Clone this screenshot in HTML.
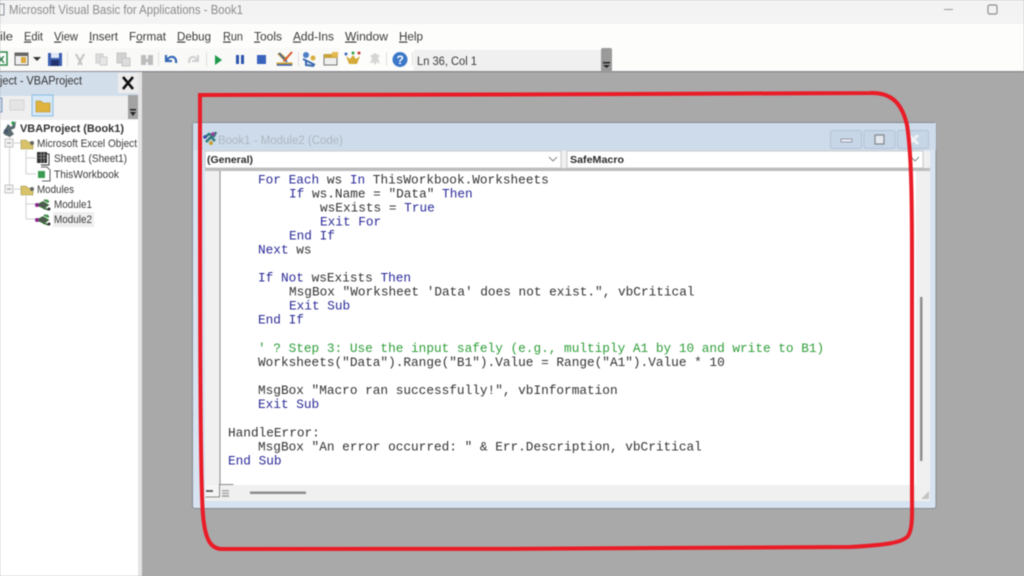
<!DOCTYPE html>
<html><head><meta charset="utf-8"><style>
html,body{margin:0;padding:0;width:1024px;height:576px;overflow:hidden;background:#a9a9a9}
svg{display:block;position:absolute;left:0;top:0;filter:blur(.4px)}
.ui{font-family:"Liberation Sans",sans-serif;font-size:11.5px;fill:#3a3a3a}
.m{font-family:"Liberation Mono",monospace;font-size:12.75px;fill:#333}
.k{fill:#2a2a98}.c{fill:#2f9e3a}
.u{text-decoration:underline}
</style></head><body>
<svg width="1024" height="576" viewBox="0 0 1024 576" xmlns="http://www.w3.org/2000/svg">
<rect width="1024" height="576" fill="#a9a9a9"/>
<!-- title bar -->
<rect width="1024" height="24" fill="#f3f3f3"/>
<rect y="24" width="1024" height="47" fill="#fdfdfb"/>
<rect y="48" width="340" height="23" fill="#f9f9f8"/>
<rect y="71" width="1024" height="1.5" fill="#8f8f94"/>
<rect x="-3" y="4" width="7" height="11" fill="none" stroke="#8a8f99"/>
<text class="ui" x="9" y="14" textLength="234" lengthAdjust="spacingAndGlyphs" style="fill:#8c8c8c;font-size:12.5px">Microsoft Visual Basic for Applications - Book1</text>
<rect x="944" y="9" width="9" height="1" fill="#999"/>
<rect x="988" y="5" width="9" height="9" rx="1.5" fill="none" stroke="#8f8f8f" stroke-width="1.2"/>
<!-- menu -->
<g class="ui">
<text x="0" y="40.500" textLength="13" lengthAdjust="spacingAndGlyphs">ile</text>
<text x="24" y="40.500" textLength="19" lengthAdjust="spacingAndGlyphs"><tspan class="u">E</tspan>dit</text>
<text x="54" y="40.500" textLength="24" lengthAdjust="spacingAndGlyphs"><tspan class="u">V</tspan>iew</text>
<text x="89" y="40.500" textLength="29" lengthAdjust="spacingAndGlyphs"><tspan class="u">I</tspan>nsert</text>
<text x="129" y="40.500" textLength="37" lengthAdjust="spacingAndGlyphs">F<tspan class="u">o</tspan>rmat</text>
<text x="177" y="40.500" textLength="34" lengthAdjust="spacingAndGlyphs"><tspan class="u">D</tspan>ebug</text>
<text x="223" y="40.500" textLength="20" lengthAdjust="spacingAndGlyphs"><tspan class="u">R</tspan>un</text>
<text x="254" y="40.500" textLength="28" lengthAdjust="spacingAndGlyphs"><tspan class="u">T</tspan>ools</text>
<text x="293" y="40.500" textLength="41" lengthAdjust="spacingAndGlyphs"><tspan class="u">A</tspan>dd-Ins</text>
<text x="345" y="40.500" textLength="43" lengthAdjust="spacingAndGlyphs"><tspan class="u">W</tspan>indow</text>
<text x="399" y="40.500" textLength="24" lengthAdjust="spacingAndGlyphs"><tspan class="u">H</tspan>elp</text>
</g>
<!-- toolbar icons -->
<rect x="-4" y="52" width="11" height="13" fill="#fff" stroke="#2f8a4a" stroke-width="1.5"/>
<text x="-2" y="63" style="font:bold 10px 'Liberation Sans',sans-serif;fill:#1f7a3f">X</text>
<rect x="15" y="53" width="13" height="12" fill="#eee" stroke="#666"/><rect x="15" y="53" width="13" height="3" fill="#666"/><rect x="21" y="57" width="5" height="6" fill="#d9a93f"/>
<path d="M33 57h8l-4 4z" fill="#333"/>
<rect x="48" y="53" width="14" height="13" fill="#3d5fb0"/><rect x="51" y="53" width="8" height="5" fill="#dfe6f5"/><rect x="51" y="60" width="8" height="6" fill="#22336f"/>
<rect x="67" y="52" width="1" height="14" fill="#ddd"/>
<path d="M76 54l6 11M84 54l-6 11" stroke="#c4c4c4" stroke-width="2" fill="none"/>
<rect x="96" y="54" width="7" height="9" fill="#ddd" stroke="#ccc"/><rect x="100" y="57" width="7" height="8" fill="#e6e6e6" stroke="#ccc"/>
<rect x="117" y="53" width="9" height="10" fill="#d2d2d2" stroke="#c4c4c4"/><rect x="122" y="58" width="8" height="8" fill="#ddd" stroke="#c4c4c4"/>
<path d="M141 55h5v4h2v-4h5v10h-5v-3h-2v3h-5z" fill="#bdbdbd"/>
<rect x="158" y="52" width="1" height="14" fill="#ddd"/>
<path d="M166 55v6h6M167 60c3-5 10-4 9 3" fill="none" stroke="#3568b5" stroke-width="2.2"/>
<path d="M198 55v6h-6M197 60c-3-5-8-4-8 3" fill="none" stroke="#cfcfcf" stroke-width="2"/>
<rect x="206" y="52" width="1" height="14" fill="#ddd"/>
<path d="M215 55l7 5-7 5z" fill="#1f9a4a"/>
<rect x="236" y="55" width="3" height="9" fill="#2c55ad"/><rect x="241" y="55" width="3" height="9" fill="#2c55ad"/>
<rect x="257" y="55" width="9" height="9" fill="#3a63bd"/>
<path d="M277 65h15v-2h-15zM278 54l7 7 2-2-7-6zM292 52l-9 10" fill="#c8a032" stroke="#c8a032"/>
<path d="M277 65h15M279 53l8 9" stroke="#3560b0" stroke-width="1.5"/>
<path d="M292 52l-8 9" stroke="#d65a2a" stroke-width="2"/>
<rect x="298" y="52" width="1" height="14" fill="#ddd"/>
<circle cx="306" cy="55" r="3" fill="#4c7fc4"/><path d="M303 59l12 6M306 60v5l8 1" stroke="#3a6aae" stroke-width="2" fill="none"/><circle cx="313" cy="58" r="2.5" fill="#d8b040"/>
<rect x="324" y="55" width="13" height="10" fill="#efefef" stroke="#777"/><rect x="324" y="54" width="13" height="4" fill="#c9a23a"/><rect x="332" y="52" width="6" height="5" fill="#e3b950"/>
<path d="M346 56l3 8h8l3-8-4 3-3-4-3 4z" fill="#d4aa3a"/><circle cx="346" cy="54" r="1.5" fill="#3a6ac0"/><circle cx="353" cy="53" r="1.5" fill="#3aa04a"/><circle cx="359" cy="53" r="1.5" fill="#c83a3a"/>
<path d="M370 56l5-3 5 3-2 2 2 6-3-2-2 3-2-3-3 2 2-6z" fill="#d6d6d6"/>
<rect x="386" y="52" width="1" height="14" fill="#ddd"/>
<circle cx="400" cy="59.5" r="7.5" fill="#3b78c8"/><text x="396.500" y="64" style="font:bold 12px 'Liberation Sans',sans-serif;fill:#fff">?</text>
<rect x="412" y="52" width="1" height="14" fill="#ddd"/>
<rect x="414" y="50" width="188" height="21" fill="#f0f0f0"/>
<text class="ui" x="417" y="65" textLength="60" lengthAdjust="spacingAndGlyphs">Ln 36, Col 1</text>
<rect x="601" y="48" width="11" height="24" rx="2" fill="#9a9a9a"/>
<rect x="603" y="62" width="7" height="1.5" fill="#222"/><path d="M603 65h7l-3.500 3z" fill="#222"/>
<!-- project pane -->
<rect x="0" y="72" width="142" height="504" fill="#e4e4e4"/>
<rect x="0" y="72" width="138" height="24" fill="#d3deeb"/>
<text class="ui" x="0" y="84.500" textLength="82" lengthAdjust="spacingAndGlyphs" style="fill:#333">ject - VBAProject</text>
<rect x="118" y="73" width="20" height="20" fill="#ececec"/>
<path d="M123 77l10 12M133 77l-10 12" stroke="#111" stroke-width="2.600"/>
<rect x="0" y="96" width="138" height="24" fill="#efefef"/>
<rect x="-8" y="98" width="10" height="14" fill="#cfd9e6" stroke="#7a9bc9"/>
<rect x="10" y="100" width="14" height="10" fill="#e4e4e4" stroke="#d4d4d4"/>
<rect x="32" y="95" width="21" height="21" fill="#d6e7f6" stroke="#88bde3"/>
<path d="M36 101h5l2 2h7v9H36z" fill="#e0b33f" stroke="#b08c2c" stroke-width=".6"/>
<rect x="128" y="95" width="10" height="24" fill="#a3a3a3"/>
<rect x="130" y="109" width="6" height="1.500" fill="#222"/><path d="M130 112h6l-3 4z" fill="#222"/>
<rect x="0" y="120" width="138" height="456" fill="#fff"/>
<!-- tree -->
<g stroke="#d0d0d0" fill="none">
<path d="M9.500 136v53M14 143h8M14 189h8M26 150v24M26 158h10M26 174h10M26 196v23M26 204h10M26 219h10"/>
</g>
<rect x="5" y="139" width="8" height="8" fill="#f2f2f2" stroke="#c4c4c4"/><rect x="7" y="142.500" width="4" height="1" fill="#999"/>
<rect x="5" y="185" width="8" height="8" fill="#f2f2f2" stroke="#c4c4c4"/><rect x="7" y="188.500" width="4" height="1" fill="#999"/>
<path d="M3 133l5-9 3 3 5-6-1 7-4 2 3 4-4 3-5-2z" fill="#5a6a70"/><circle cx="13" cy="123" r="1.600" fill="#2a9a4a"/><circle cx="6" cy="131" r="2" fill="#44566a"/>
<path d="M21 140h5l2 2h5v7H21z" fill="#d8c26a" stroke="#a3954e" stroke-width=".6"/><circle cx="32" cy="143" r="2" fill="#666"/>
<path d="M21 186h5l2 2h5v7H21z" fill="#d8c26a" stroke="#a3954e" stroke-width=".6"/><circle cx="32" cy="189" r="2" fill="#666"/>
<rect x="37" y="152" width="10" height="11" fill="#333"/><path d="M38 155h8M38 158h8M41 152v11M44 152v11" stroke="#aaa" stroke-width=".6"/>
<path d="M47 154h2v11h-8" fill="none" stroke="#333"/>
<path d="M41 167h6l3 3v11h-8" fill="#fff" stroke="#333" stroke-width=".8"/><rect x="38" y="171" width="7" height="7" fill="#3a9a50"/>
<path d="M37 205l6-3 5 3-4 3zM44 200l5 2M43 208l6 2" stroke="#3c6a3c" stroke-width="1.500" fill="#555"/><circle cx="37" cy="205" r="2" fill="#8a2a8a"/><circle cx="47" cy="201" r="1.500" fill="#3a9a4a"/><circle cx="49" cy="209" r="1.500" fill="#333"/>
<path d="M37 220l6-3 5 3-4 3zM44 215l5 2M43 223l6 2" stroke="#3c6a3c" stroke-width="1.500" fill="#555"/><circle cx="37" cy="220" r="2" fill="#8a2a8a"/><circle cx="47" cy="216" r="1.500" fill="#3a9a4a"/><circle cx="49" cy="224" r="1.500" fill="#333"/>
<rect x="53" y="212" width="41" height="15" fill="#efefef"/>
<g class="ui" style="font-size:11px">
<text x="20" y="132" textLength="104" lengthAdjust="spacingAndGlyphs" style="font-weight:bold;fill:#333">VBAProject (Book1)</text>
<text x="37" y="147" textLength="100" lengthAdjust="spacingAndGlyphs">Microsoft Excel Object</text>
<text x="54" y="162" textLength="73" lengthAdjust="spacingAndGlyphs">Sheet1 (Sheet1)</text>
<text x="54" y="178" textLength="65" lengthAdjust="spacingAndGlyphs">ThisWorkbook</text>
<text x="37" y="193" textLength="37" lengthAdjust="spacingAndGlyphs">Modules</text>
<text x="54" y="208" textLength="38" lengthAdjust="spacingAndGlyphs">Module1</text>
<text x="54" y="223" textLength="38" lengthAdjust="spacingAndGlyphs">Module2</text>
</g>
<!-- code window -->
<rect x="192.500" y="122.500" width="743.500" height="386" rx="2.500" fill="#d7e3f1" stroke="#858a90"/>
<rect x="193" y="123" width="743" height="27" fill="#cddbea"/>
<path d="M204 138l5-4 5 2 2-4M206 142l5-5 4 4" stroke="#2f7a7a" stroke-width="2.500" fill="none"/><circle cx="205" cy="137" r="1.800" fill="#3a4ab0"/><circle cx="213" cy="134" r="1.800" fill="#a03aa0"/><circle cx="211" cy="143" r="2" fill="#c4a030"/>
<text class="ui" x="218" y="144" textLength="125" lengthAdjust="spacingAndGlyphs" style="fill:#aeb7c2">Book1 - Module2 (Code)</text>
<g fill="#c7d6e6" stroke="#b3c3d6"><rect x="830.500" y="130.500" width="31" height="18" rx="2"/><rect x="864" y="130.500" width="31" height="18" rx="2"/><rect x="897.500" y="130.500" width="31" height="18" rx="2"/></g>
<rect x="841" y="139" width="11" height="3" fill="#eef" stroke="#858b94" stroke-width=".8"/>
<rect x="875" y="135" width="9" height="9" fill="#e4e8ee" stroke="#858b94" stroke-width="1.300"/>
<path d="M909 135l9 9M918 135l-9 9" stroke="#eef2f6" stroke-width="3"/>
<rect x="205" y="151" width="725" height="350" fill="#f0f0f0"/>
<rect x="205" y="151" width="356" height="17" fill="#fff" stroke="#c8c8c8"/>
<rect x="567" y="151" width="356" height="17" fill="#fff" stroke="#c8c8c8"/>
<path d="M549 157l4 4 4-4" fill="none" stroke="#888"/><path d="M911 157l4 4 4-4" fill="none" stroke="#888"/>
<text class="ui" x="207" y="163" textLength="46" lengthAdjust="spacingAndGlyphs" style="font-size:10.500px;font-weight:bold;fill:#2a2a2a">(General)</text>
<text class="ui" x="570" y="163" textLength="54" lengthAdjust="spacingAndGlyphs" style="font-size:10.500px;font-weight:bold;fill:#2a2a2a">SafeMacro</text>
<rect x="205" y="168" width="725" height="3" fill="#bdbdbd"/>
<rect x="220" y="171" width="696" height="314" fill="#fff"/>
<rect x="219.500" y="171" width="1" height="314" fill="#8a8a8a"/>
<rect x="205" y="485" width="725" height="16" fill="#f0f0f0"/>
<rect x="916" y="171" width="14" height="330" fill="#f0f0f0"/>
<rect x="920" y="297" width="2.500" height="164" fill="#8e8e8e"/>
<rect x="250" y="491.500" width="56" height="2.500" fill="#8e8e8e"/>
<path d="M205 485h14v12h-14z" fill="#f4f4f4"/><path d="M219.500 484v13h-14" fill="none" stroke="#8a8a8a"/>
<path d="M219.500 484.500h14" fill="none" stroke="#8a8a8a"/>
<rect x="206" y="490" width="7" height="2" fill="#666"/>
<rect x="222" y="490" width="7" height="7" fill="#aaa"/><path d="M222 492h7M222 494.500h7" stroke="#f4f4f4"/>
<path d="M921 499h8v-8z" fill="#c4c4c4"/>
<!-- code -->
<g class="m">
<text x="258" y="183.500"><tspan class="k">For Each</tspan> ws <tspan class="k">In</tspan> ThisWorkbook.Worksheets</text>
<text x="289" y="197.500"><tspan class="k">If</tspan> ws.Name = "Data" <tspan class="k">Then</tspan></text>
<text x="320" y="211.500">wsExists = <tspan class="k">True</tspan></text>
<text x="320" y="225.500" class="m k">Exit For</text>
<text x="289" y="239.500" class="m k">End If</text>
<text x="258" y="253.500"><tspan class="k">Next</tspan> ws</text>
<text x="258" y="281.700"><tspan class="k">If Not</tspan> wsExists <tspan class="k">Then</tspan></text>
<text x="289" y="295.700">MsgBox "Worksheet 'Data' does not exist.", vbCritical</text>
<text x="289" y="309.700" class="m k">Exit Sub</text>
<text x="258" y="323.700" class="m k">End If</text>
<text x="258" y="351.900" class="m c">' ? Step 3: Use the input safely (e.g., multiply A1 by 10 and write to B1)</text>
<text x="258" y="365.900">Worksheets("Data").Range("B1").Value = Range("A1").Value * 10</text>
<text x="258" y="394.200">MsgBox "Macro ran successfully!", vbInformation</text>
<text x="258" y="408.200" class="m k">Exit Sub</text>
<text x="228" y="436.400">HandleError:</text>
<text x="258" y="450.400">MsgBox "An error occurred: " &amp; Err.Description, vbCritical</text>
<text x="228" y="464.400" class="m k">End Sub</text>
</g>
<!-- red annotation -->
<path d="M198 95 C400 95 700 94 870 93 C892 92 902 104 907 125 C911 150 912 190 912 260 L912 490 C912 515 913 528 908 536 C902 543 885 545 850 547 C700 549 400 549 222 549 C210 549 205 538 203 515 C200 480 200 300 200 97" fill="none" stroke="#ea1c27" stroke-width="4" stroke-linejoin="round"/>
</svg>
</body></html>
